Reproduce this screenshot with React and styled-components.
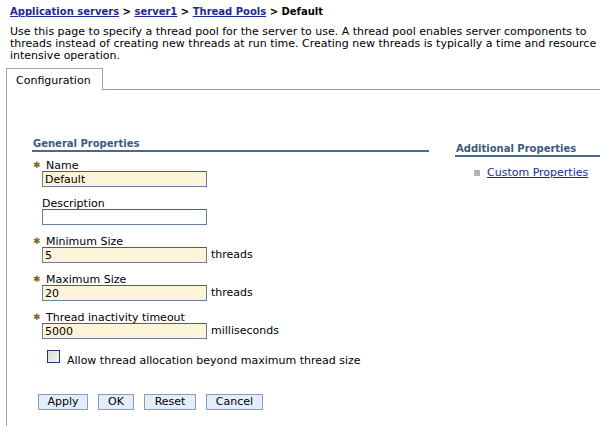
import React from 'react'
import styled, { createGlobalStyle } from 'styled-components'

const Global = createGlobalStyle`
  html, body {
    margin: 0;
    padding: 0;
    background: #ffffff;
  }
  body {
    font-family: 'DejaVu Sans', Verdana, sans-serif;
    font-size: 11px;
    color: #000000;
    overflow: hidden;
  }
`

const Page = styled.div`
  width: 600px;
  height: 426px;
  overflow: hidden;
  padding: 6px 0 0 6px;
  box-sizing: border-box;
`

const Header = styled.div`
  padding-left: 4px;
`

const Breadcrumb = styled.div`
  font-weight: bold;
  font-size: 10px;
  line-height: 12px;
  white-space: nowrap;
`

const Crumb = styled.a`
  color: #1b2a94;
  text-decoration: underline;
`

const Intro = styled.p`
  margin: 8px 0 0 0;
  line-height: 12px;
  white-space: nowrap;
`

const TabStrip = styled.div`
  display: flex;
  margin-top: 6px;
  height: 22px;
`

const Tab = styled.div`
  width: 97px;
  border: 1px solid #9ca3ad;
  border-bottom: none;
  padding: 6px 0 0 9px;
  box-sizing: border-box;
  line-height: 12px;
`

const TabFiller = styled.div`
  flex: 1;
  border-bottom: 1px solid #8f9fb4;
`

const Panel = styled.div`
  border-left: 1px solid #9ca3ad;
  height: 400px;
  display: flex;
  overflow: hidden;
  padding: 48px 0 0 25px;
  box-sizing: border-box;
`

const MainColumn = styled.div`
  width: 397px;
  flex-shrink: 0;
`

const SideColumn = styled.div`
  width: 170px;
  flex-shrink: 0;
  margin-left: 26px;
  padding-top: 5px;
`

const SectionTitle = styled.div`
  font-weight: bold;
  font-size: 10px;
  color: #3a5a82;
  line-height: 12px;
  padding-left: 1px;
  border-bottom: 2px solid #4a6890;
  white-space: nowrap;
`

const Fields = styled.div`
  padding-left: 10px;
  padding-top: 8px;
`

const Field = styled.div`
  margin-bottom: 11px;
`

const Label = styled.div`
  display: flex;
  line-height: 11px;
  margin-left: ${p => (p.$required ? '-9px' : '0')};
  white-space: nowrap;
`

const Star = styled.span`
  width: 13px;
  color: #7a6a26;
  font-size: 9px;
  line-height: 11px;
`

const InputRow = styled.div`
  display: flex;
  align-items: center;
`

const Input = styled.div`
  width: 165px;
  height: 16px;
  box-sizing: border-box;
  border: 1px solid #6b7f99;
  border-top-color: #4a5f7c;
  background: ${p => (p.$required ? '#fdf3d9' : '#ffffff')};
  padding: 1px 0 0 2px;
  line-height: 13px;
`

const Unit = styled.span`
  margin-left: 4px;
  line-height: 12px;
`

const CheckRow = styled.div`
  display: flex;
  align-items: flex-start;
  height: 17px;
  margin-top: 5px;
  padding-left: 5px;
`

const Box = styled.span`
  width: 13px;
  height: 13px;
  box-sizing: border-box;
  border: 1px solid #1e3a66;
  background: linear-gradient(135deg, #dcdcd6 0%, #f4f4f0 100%);
`

const CheckText = styled.span`
  margin-left: 7px;
  padding-top: 5px;
  line-height: 12px;
  white-space: nowrap;
`

const Buttons = styled.div`
  display: flex;
  gap: 10px;
  margin-top: 27px;
  padding-left: 6px;
`

const Button = styled.button`
  font-family: 'DejaVu Sans', Verdana, sans-serif;
  font-size: 11px;
  height: 16px;
  width: ${p => p.$w}px;
  padding: 0;
  line-height: 12px;
  border: 1px solid #8c9cb4;
  background: #e4eefb;
  color: #000;
`

const LinkList = styled.div`
  display: flex;
  align-items: center;
  margin-top: 10px;
  padding-left: 19px;
`

const Bullet = styled.span`
  width: 6px;
  height: 6px;
  background: #b4b4b4;
  margin-right: 7px;
`

const SideLink = styled.a`
  color: #1b2a94;
  text-decoration: underline;
  line-height: 12px;
  white-space: nowrap;
`

const fields = [
  { label: 'Name', value: 'Default', required: true },
  { label: 'Description', value: '', required: false },
  { label: 'Minimum Size', value: '5', required: true, unit: 'threads' },
  { label: 'Maximum Size', value: '20', required: true, unit: 'threads' },
  { label: 'Thread inactivity timeout', value: '5000', required: true, unit: 'milliseconds' },
]

const buttons = [
  { text: 'Apply', w: 50 },
  { text: 'OK', w: 36 },
  { text: 'Reset', w: 52 },
  { text: 'Cancel', w: 57 },
]

export default function App() {
  return (
    <Page>
      <Global />
      <Header>
        <Breadcrumb>
          <Crumb>Application servers</Crumb> &gt; <Crumb>server1</Crumb> &gt;{' '}
          <Crumb>Thread Pools</Crumb> &gt; Default
        </Breadcrumb>
        <Intro>
          Use this page to specify a thread pool for the server to use. A thread pool enables server components to
          <br />
          threads instead of creating new threads at run time. Creating new threads is typically a time and resource
          <br />
          intensive operation.
        </Intro>
      </Header>
      <TabStrip>
        <Tab>Configuration</Tab>
        <TabFiller />
      </TabStrip>
      <Panel>
        <MainColumn>
          <SectionTitle>General Properties</SectionTitle>
          <Fields>
            {fields.map(f => (
              <Field key={f.label}>
                <Label $required={f.required}>
                  {f.required && <Star>✱</Star>}
                  {f.label}
                </Label>
                <InputRow>
                  <Input $required={f.required}>{f.value}</Input>
                  {f.unit && <Unit>{f.unit}</Unit>}
                </InputRow>
              </Field>
            ))}
            <CheckRow>
              <Box />
              <CheckText>Allow thread allocation beyond maximum thread size</CheckText>
            </CheckRow>
          </Fields>
          <Buttons>
            {buttons.map(b => (
              <Button key={b.text} $w={b.w}>{b.text}</Button>
            ))}
          </Buttons>
        </MainColumn>
        <SideColumn>
          <SectionTitle>Additional Properties</SectionTitle>
          <LinkList>
            <Bullet />
            <SideLink>Custom Properties</SideLink>
          </LinkList>
        </SideColumn>
      </Panel>
    </Page>
  )
}
